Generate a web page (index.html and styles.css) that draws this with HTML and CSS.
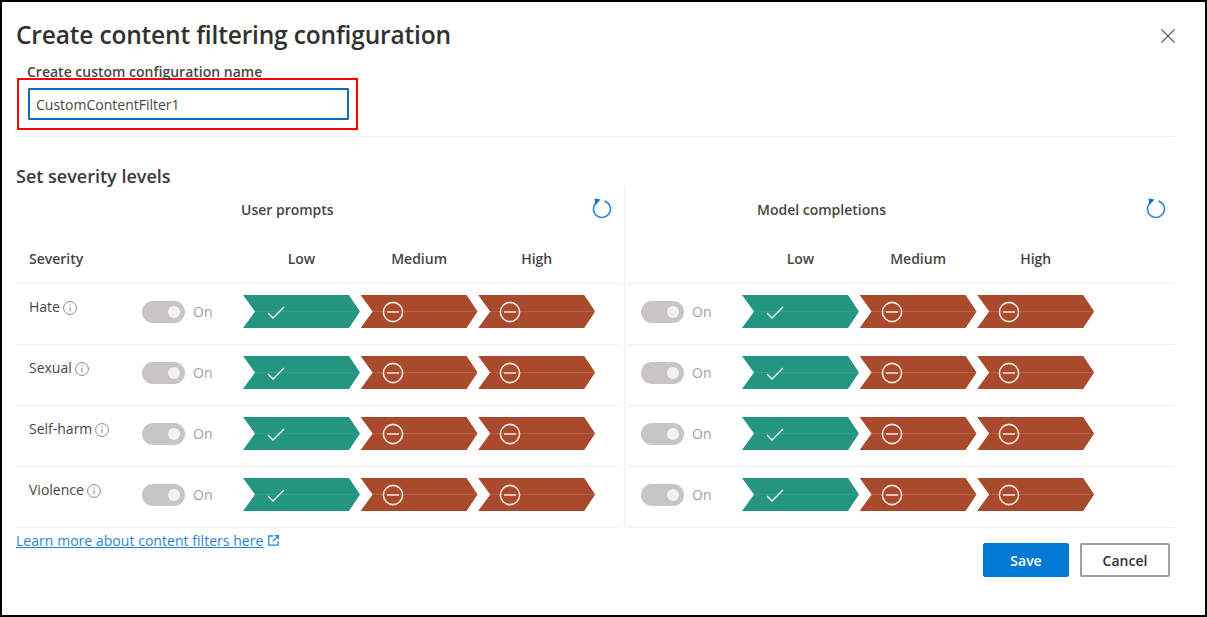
FILE: index.html
```html
<!DOCTYPE html>
<html>
<head>
    <meta charset="utf-8">
    <title>Create content filtering configuration</title>
    <link rel="stylesheet" href="styles.css">
</head>
<body>

    <!-- shared icons -->
    <svg class="defs" width="0" height="0">
        <symbol id="check" viewBox="0 0 18 13"><path d="M1 7l5 5L17 1" fill="none" stroke="#fff" stroke-width="1.3"/></symbol>
        <symbol id="block" viewBox="0 0 22 22"><circle cx="11" cy="11" r="9.6" fill="none" stroke="#f6e6e0" stroke-width="1.6"/><path d="M5 11h12" stroke="#f6e6e0" stroke-width="1.6"/></symbol>
        <symbol id="info" viewBox="0 0 14 14"><circle cx="7" cy="7" r="6.4" fill="none" stroke="#8a8886"/><path d="M7 6v4.4" stroke="#8a8886"/><circle cx="7" cy="4" r=".7" fill="#8a8886"/></symbol>
        <symbol id="reset" viewBox="0 0 20 20"><path d="M12.500 2.900A8.500 8.500 0 1 1 4.400 4.600" fill="none" stroke="#2b88d8" stroke-width="1.6"/><path d="M2.500.5l6 1-5 5.500z" fill="#106ebe"/></symbol>
    </svg>

    <div class="dialog">
        <div class="header">
            <h1 class="title">Create content filtering configuration</h1>
            <svg class="close" width="14" height="14" viewBox="0 0 14 14"><path d="M.5.5l13 13M13.500.5l-13 13" stroke="#605e5c" stroke-width="1.2"/></svg>
        </div>

        <div class="name-label">Create custom configuration name</div>
        <div class="name-box">
            <input class="name-input" type="text" value="CustomContentFilter1">
        </div>
        <div class="divider"></div>

        <h2 class="subtitle">Set severity levels</h2>

        <div class="columns">
            <div class="column column-left">
                <div class="column-head">
                    <span class="column-title">User prompts</span>
                    <svg class="reset" width="20" height="20"><use href="#reset"/></svg>
                </div>
                <div class="row row-head">
                    <span class="severity">Severity</span>
                    <span></span>
                    <span class="level-name">Low</span>
                    <span class="level-name">Medium</span>
                    <span class="level-name">High</span>
                </div>
                <div class="row">
                    <span class="category">Hate<svg class="info" width="14" height="14"><use href="#info"/></svg></span>
                    <span class="toggle-cell"><span class="toggle"></span><span class="toggle-text">On</span></span>
                    <span class="arrow arrow-ok"><svg class="check" width="18" height="13"><use href="#check"/></svg></span>
                    <span class="arrow arrow-block"><svg class="block" width="22" height="22"><use href="#block"/></svg></span>
                    <span class="arrow arrow-block"><svg class="block" width="22" height="22"><use href="#block"/></svg></span>
                </div>
                <div class="row">
                    <span class="category">Sexual<svg class="info" width="14" height="14"><use href="#info"/></svg></span>
                    <span class="toggle-cell"><span class="toggle"></span><span class="toggle-text">On</span></span>
                    <span class="arrow arrow-ok"><svg class="check" width="18" height="13"><use href="#check"/></svg></span>
                    <span class="arrow arrow-block"><svg class="block" width="22" height="22"><use href="#block"/></svg></span>
                    <span class="arrow arrow-block"><svg class="block" width="22" height="22"><use href="#block"/></svg></span>
                </div>
                <div class="row">
                    <span class="category">Self-harm<svg class="info" width="14" height="14"><use href="#info"/></svg></span>
                    <span class="toggle-cell"><span class="toggle"></span><span class="toggle-text">On</span></span>
                    <span class="arrow arrow-ok"><svg class="check" width="18" height="13"><use href="#check"/></svg></span>
                    <span class="arrow arrow-block"><svg class="block" width="22" height="22"><use href="#block"/></svg></span>
                    <span class="arrow arrow-block"><svg class="block" width="22" height="22"><use href="#block"/></svg></span>
                </div>
                <div class="row">
                    <span class="category">Violence<svg class="info" width="14" height="14"><use href="#info"/></svg></span>
                    <span class="toggle-cell"><span class="toggle"></span><span class="toggle-text">On</span></span>
                    <span class="arrow arrow-ok"><svg class="check" width="18" height="13"><use href="#check"/></svg></span>
                    <span class="arrow arrow-block"><svg class="block" width="22" height="22"><use href="#block"/></svg></span>
                    <span class="arrow arrow-block"><svg class="block" width="22" height="22"><use href="#block"/></svg></span>
                </div>
            </div>

            <div class="column column-right">
                <div class="column-head">
                    <span class="column-title">Model completions</span>
                    <svg class="reset" width="20" height="20"><use href="#reset"/></svg>
                </div>
                <div class="row row-head">
                    <span></span>
                    <span></span>
                    <span class="level-name">Low</span>
                    <span class="level-name">Medium</span>
                    <span class="level-name">High</span>
                </div>
                <div class="row">
                    <span></span>
                    <span class="toggle-cell"><span class="toggle"></span><span class="toggle-text">On</span></span>
                    <span class="arrow arrow-ok"><svg class="check" width="18" height="13"><use href="#check"/></svg></span>
                    <span class="arrow arrow-block"><svg class="block" width="22" height="22"><use href="#block"/></svg></span>
                    <span class="arrow arrow-block"><svg class="block" width="22" height="22"><use href="#block"/></svg></span>
                </div>
                <div class="row">
                    <span></span>
                    <span class="toggle-cell"><span class="toggle"></span><span class="toggle-text">On</span></span>
                    <span class="arrow arrow-ok"><svg class="check" width="18" height="13"><use href="#check"/></svg></span>
                    <span class="arrow arrow-block"><svg class="block" width="22" height="22"><use href="#block"/></svg></span>
                    <span class="arrow arrow-block"><svg class="block" width="22" height="22"><use href="#block"/></svg></span>
                </div>
                <div class="row">
                    <span></span>
                    <span class="toggle-cell"><span class="toggle"></span><span class="toggle-text">On</span></span>
                    <span class="arrow arrow-ok"><svg class="check" width="18" height="13"><use href="#check"/></svg></span>
                    <span class="arrow arrow-block"><svg class="block" width="22" height="22"><use href="#block"/></svg></span>
                    <span class="arrow arrow-block"><svg class="block" width="22" height="22"><use href="#block"/></svg></span>
                </div>
                <div class="row">
                    <span></span>
                    <span class="toggle-cell"><span class="toggle"></span><span class="toggle-text">On</span></span>
                    <span class="arrow arrow-ok"><svg class="check" width="18" height="13"><use href="#check"/></svg></span>
                    <span class="arrow arrow-block"><svg class="block" width="22" height="22"><use href="#block"/></svg></span>
                    <span class="arrow arrow-block"><svg class="block" width="22" height="22"><use href="#block"/></svg></span>
                </div>
            </div>
        </div>

        <div class="footer">
            <a class="learn-link" href="#">Learn more about content filters here</a>
            <svg class="external" width="11" height="11" viewBox="0 0 11 11"><path d="M5 1H.8v9.200H10V6M6.500.7h3.800v3.800M10.200.8L4.800 6.200" fill="none" stroke="#2b88d8" stroke-width="1.300"/></svg>
            <div class="buttons">
                <button class="btn btn-primary">Save</button>
                <button class="btn btn-default">Cancel</button>
            </div>
        </div>
    </div>

</body>
</html>
```

FILE: styles.css
```css
html, body {
    margin: 0;
    padding: 0;
    background: #fff;
}
body {
    font-family: "Open Sans", "Noto Sans", sans-serif;
    color: #323130;
}
.defs {
    display: block;
    height: 0;
}
.dialog {
    box-sizing: border-box;
    width: 1207px;
    height: 617px;
    border: 2px solid #000;
    padding: 0 30px 0 14px;
    background: #fff;
    overflow: hidden;
}

/* title */
.header {
    display: flex;
    justify-content: space-between;
    align-items: center;
    height: 66px;
    margin-bottom: -4px;
}
.title {
    margin: 0;
    font-size: 24.5px;
    font-weight: 600;
    line-height: 32px;
    letter-spacing: -0.17px;
    color: #323130;
}
.close {
    margin-top: 2px;
}

/* name field */
.name-label {
    margin-left: 11px;
    height: 14px;
    font-size: 14px;
    font-weight: 600;
    line-height: 16px;
    color: #484644;
}
.name-box {
    box-sizing: border-box;
    width: 341px;
    height: 52px;
    margin-left: 1px;
    padding: 8px 9px;
    border: 2px solid #f00;
}
.name-input {
    box-sizing: border-box;
    display: block;
    width: 321px;
    height: 32px;
    padding: 0 6px;
    border: 2px solid #0f6cbd;
    border-radius: 1px;
    outline: none;
    font-family: inherit;
    font-size: 14px;
    color: #484644;
}
.divider {
    height: 1px;
    margin-top: 6px;
    background: #f0efee;
}
.subtitle {
    margin: 27px 0 0;
    height: 23px;
    font-size: 18px;
    font-weight: 600;
    line-height: 24px;
    color: #3b3a39;
}

/* severity columns */
.columns {
    display: flex;
}
.column-left {
    box-sizing: border-box;
    width: 609px;
    padding-right: 4px;
    border-right: 1px solid #f0efee;
}
.column-right {
    width: 548px;
    margin-left: 2px;
}
.column-head {
    display: flex;
    justify-content: space-between;
    align-items: center;
    height: 46px;
    padding-right: 9px;
}
.column-left .column-head {
    padding-right: 8px;
}
.column-title {
    margin-top: -2px;
    font-size: 14px;
    font-weight: 600;
    color: #484644;
}
.column-left .column-title {
    margin-left: 225px;
}
.column-right .column-title {
    margin-left: 130px;
}
.reset {
    margin-top: -4px;
}

.row {
    display: grid;
    grid-template-columns: 126px 101px 117.600px 117.600px 118px;
    box-sizing: border-box;
    height: 61px;
    padding-top: 11px;
    border-bottom: 1px solid #f0efee;
}
.column-right .row {
    grid-template-columns: 14px 101px 117.600px 117.600px 118px;
}
.column-left .row-head,
.column-right .row-head {
    height: 51px;
    padding-top: 15px;
}
.severity {
    margin-left: 13px;
    font-size: 14px;
    font-weight: 600;
    line-height: 22px;
    color: #484644;
}
.level-name {
    width: 117px;
    text-align: center;
    font-size: 14px;
    font-weight: 600;
    line-height: 22px;
    color: #484644;
}
.category {
    display: flex;
    align-items: center;
    height: 22px;
    margin-left: 13px;
    font-size: 14px;
    color: #484644;
}
.info {
    margin: 4px 0 0 3px;
}

/* toggle */
.toggle-cell {
    display: flex;
    align-items: center;
    height: 33px;
}
.toggle {
    position: relative;
    width: 43px;
    height: 22px;
    border-radius: 11px;
    background: #c8c6c4;
}
.toggle::after {
    content: "";
    position: absolute;
    top: 5px;
    right: 5px;
    width: 12px;
    height: 12px;
    border-radius: 50%;
    background: #f3f2f1;
}
.toggle-text {
    margin-left: 8px;
    font-size: 14px;
    color: #a19f9d;
}

/* level arrows */
.arrow {
    display: flex;
    align-items: center;
    width: 117px;
    height: 33px;
    clip-path: polygon(0 0, 106px 0, 117px 16.500px, 106px 33px, 0 33px, 12px 16.500px);
}
.arrow-ok {
    background: linear-gradient(#239580 16px, #2fa08c 16px, #2fa08c 17px, #239580 17px);
}
.arrow-block {
    background: linear-gradient(#a94a2d 16px, #b85f44 16px, #b85f44 17px, #a94a2d 17px);
}
.check {
    margin: 1px 0 0 24px;
}
.block {
    margin-left: 21px;
}

/* footer */
.footer {
    display: flex;
    align-items: flex-start;
}
.learn-link {
    margin-top: 3px;
    font-size: 14px;
    line-height: 20px;
    letter-spacing: 0.04px;
    color: #1f86d4;
}
.external {
    margin: 7px 0 0 5px;
}
.buttons {
    display: flex;
    gap: 11px;
    margin: 15px 5px 0 auto;
}
.btn {
    box-sizing: border-box;
    height: 34px;
    border-radius: 2px;
    font-family: inherit;
    font-size: 14px;
    font-weight: 600;
}
.btn-primary {
    width: 86px;
    border: 1px solid #0078d4;
    background: #0078d4;
    color: #fff;
}
.btn-default {
    width: 90px;
    border: 2px solid #a19f9d;
    background: #fff;
    color: #323130;
}
```
